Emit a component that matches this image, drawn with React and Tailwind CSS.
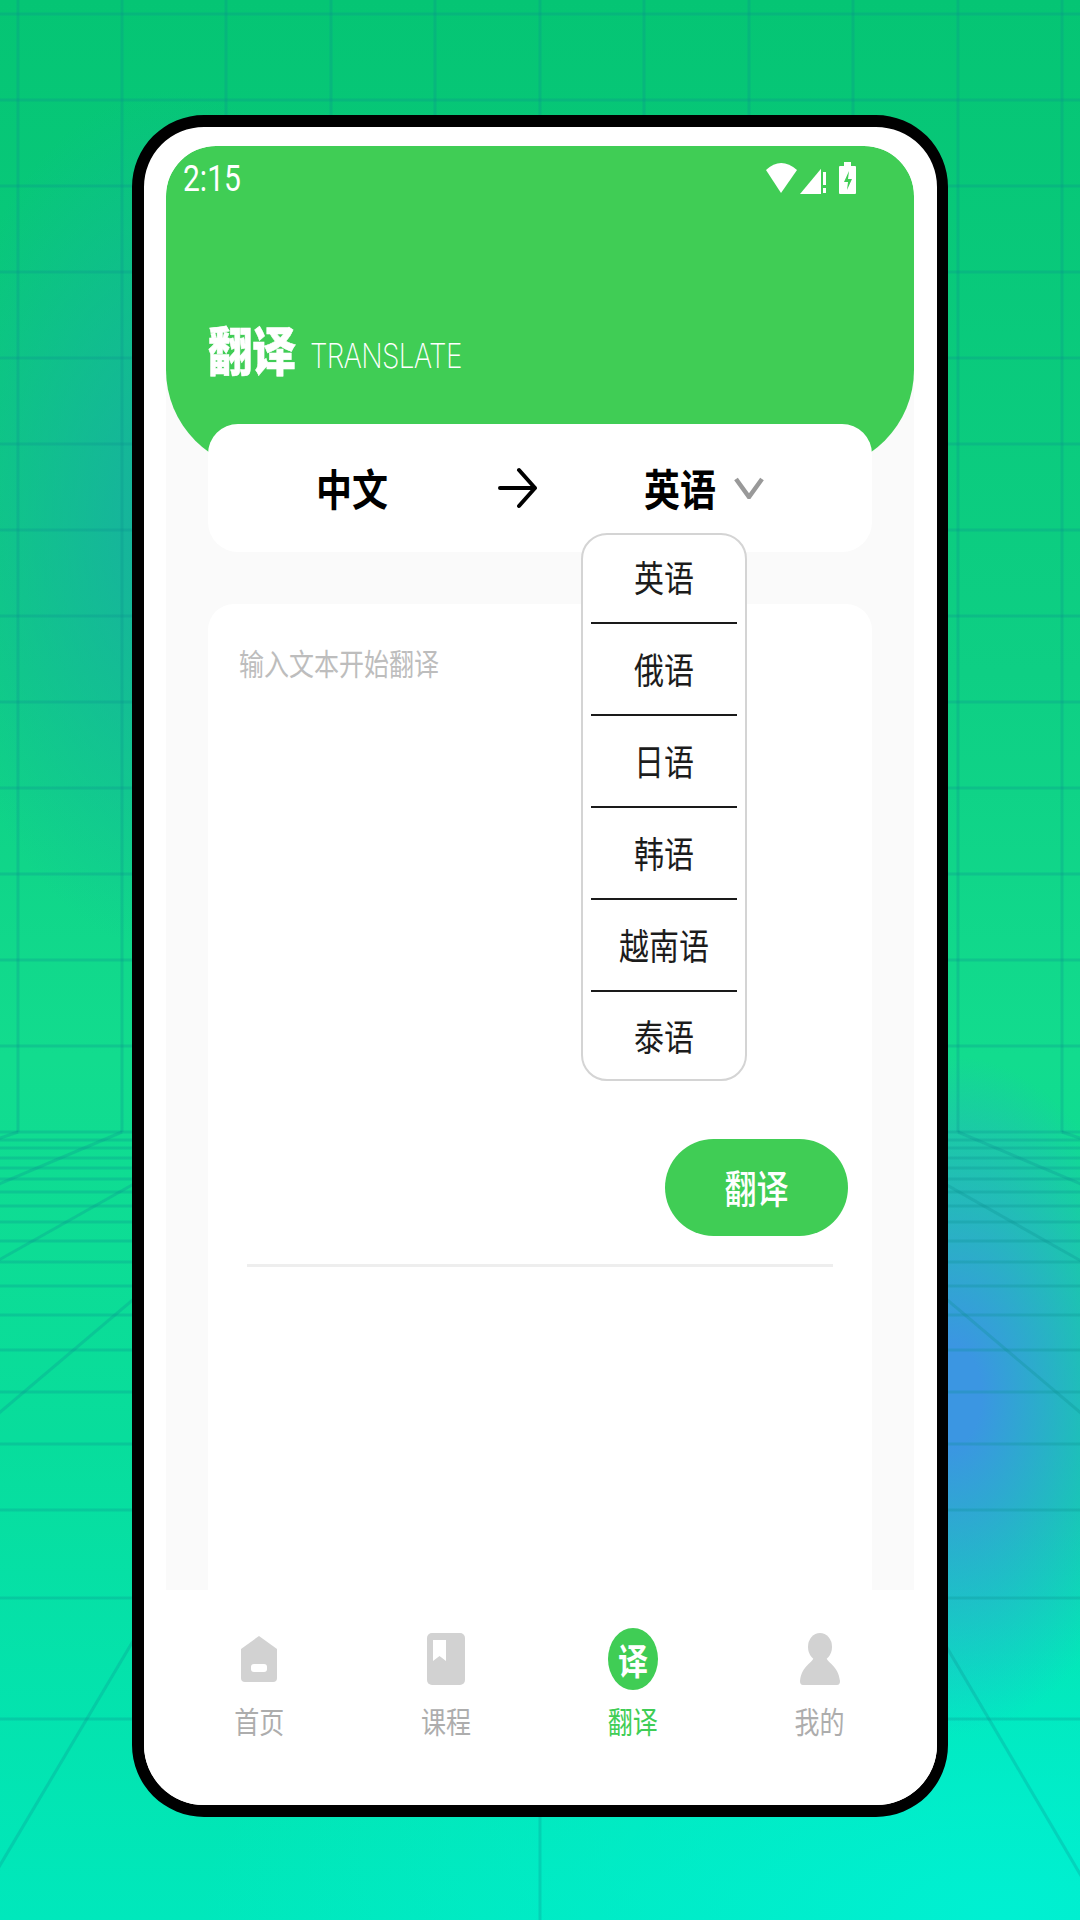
import React from 'react'

const CJK = "font-['Noto_Sans_CJK_SC','Noto_Sans',sans-serif]"

const gridX = [18, 122, 226, 331, 435, 540, 644, 749, 853, 958, 1062]
const wallY = [14, 100, 186, 272, 358, 444, 530, 616, 702, 788, 874, 960, 1046]
const floorY = [1132, 1140, 1148, 1158, 1168, 1179, 1192, 1206, 1222, 1241, 1262, 1286, 1315, 1350, 1392, 1444, 1510, 1598, 1719]

const languages = ['英语', '俄语', '日语', '韩语', '越南语', '泰语']

const GridBackdrop = () => (
  <svg className="absolute inset-0" width="1080" height="1920" viewBox="0 0 1080 1920" fill="none">
    <g stroke="#0a8f8f" strokeOpacity="0.28" strokeWidth="3">
      {gridX.map((x) => <line key={x} x1={x} y1="0" x2={x} y2="1132" />)}
      {wallY.map((y) => <line key={y} x1="0" y1={y} x2="1080" y2={y} />)}
      {floorY.map((y) => <line key={y} x1="0" y1={y} x2="1080" y2={y} />)}
      {gridX.map((x) => {
        // rays run from the vanishing point through each wall line's foot
        const k = (1920 - 955) / (1132 - 955)
        return <line key={x} x1={x} y1="1132" x2={540 + (x - 540) * k} y2="1920" />
      })}
    </g>
  </svg>
)

const StatusIcons = () => (
  <svg width="92" height="36" viewBox="0 0 92 36" fill="white">
    <path d="M1 10 Q16 -4 32 10 L16 33 Z" />
    <path d="M35 34 L60 4 V34 Z" fill="white" />
    <rect x="56" y="4" width="5" height="30" fill="#40cd55" />
    <rect x="58" y="12" width="3" height="13" />
    <rect x="58" y="28" width="3" height="5" />
    <path d="M80 3 h7 v4 h4 a1 1 0 0 1 1 1 v26 a1 1 0 0 1 -1 1 h-15 a1 1 0 0 1 -1 -1 v-26 a1 1 0 0 1 1 -1 h4 Z" transform="translate(-1 -1)" />
    <path d="M84 11 L79 22 H83 L82 30 L87 19 H83 Z" fill="#40cd55" />
  </svg>
)

const HomeIcon = () => (
  <svg width="38" height="47" viewBox="0 0 38 47" fill="#d2d2d2">
    <path d="M19 0 L37 13 V42 a4 4 0 0 1 -4 4 H5 a4 4 0 0 1 -4 -4 V13 Z" />
    <rect x="11" y="28" width="16" height="8" rx="3" fill="white" />
  </svg>
)

const BookIcon = () => (
  <svg width="38" height="52" viewBox="0 0 38 52" fill="#d2d2d2">
    <rect width="38" height="52" rx="5" />
    <path d="M6 7 H19 V28 L12.500 23 L6 28 Z" fill="white" />
  </svg>
)

const UserIcon = () => (
  <svg width="40" height="52" viewBox="0 0 40 52" fill="#d2d2d2">
    <ellipse cx="20" cy="14" rx="12" ry="14" />
    <path d="M14 24 H26 C27 30 38 32 40 48 Q40 52 37 52 H3 Q0 52 0 48 C2 32 13 30 14 24 Z" />
  </svg>
)

const NavItem = ({ icon, label, active }) => (
  <div className="flex flex-1 flex-col items-center">
    <div className="flex h-[62px] items-center justify-center">{icon}</div>
    <span className={`mt-[14px] block text-[25px] leading-[32px] scale-y-120 ${CJK} ${active ? 'text-[#40cd55]' : 'text-[#adadad]'}`}>{label}</span>
  </div>
)

export default function App() {
  return (
    <div className="relative h-[1920px] w-[1080px] overflow-hidden bg-[radial-gradient(ellipse_210px_340px_at_950px_1395px,#3b96e2_0%,#3b96e2_15%,transparent_100%),radial-gradient(ellipse_240px_430px_at_170px_520px,#18b0a0,transparent),radial-gradient(ellipse_800px_420px_at_1000px_1920px,#00f0d2,transparent),linear-gradient(to_bottom,#05c574_0%,#0ecf84_35%,#12dc8e_55%,#08dd9c_75%,#00e8bc_100%)] pt-[115px] pl-[132px]">
      <GridBackdrop />

      {/* phone frame */}
      <div className="relative flex h-[1702px] w-[816px] flex-col overflow-hidden rounded-[72px] border-y-[12px] border-r-[11px] border-l-[12px] border-black bg-white">
        <div className="mt-[19px] mr-[23px] ml-[22px] flex h-[1444px] flex-col overflow-hidden rounded-t-[50px] bg-[#fafafa]">
          <div className="flex h-[324px] shrink-0 flex-col rounded-t-[50px] rounded-b-[100px] bg-[#40cd55] pt-[14px] pr-[57px] pl-[17px] text-white">
            <div className="flex items-start justify-between">
              <span className="mt-[1px] block scale-y-120 font-['Roboto',sans-serif] text-[30px] leading-[36px] font-normal">2:15</span>
              <StatusIcons />
            </div>
            <div className="mt-[125px] ml-[25px] flex items-end">
              <span className={`block scale-y-120 text-[44px] leading-[52px] font-black [-webkit-text-stroke:0.5px_white] ${CJK}`}>翻译</span>
              <span className="mb-[3px] ml-[14px] block scale-y-120 font-['Inter',sans-serif] text-[28px] leading-[30px] font-extralight tracking-[-0.7px]">TRANSLATE</span>
            </div>
          </div>

          <div className="relative z-10 mx-[42px] -mt-[46px] flex h-[128px] shrink-0 items-center rounded-[30px] bg-white pl-[108px] text-black">
            <span className={`mb-[2px] block w-[182px] scale-y-120 text-[36px] leading-[44px] font-bold ${CJK}`}>中文</span>
            <svg width="40" height="42" viewBox="0 0 40 42" fill="none" stroke="black" strokeWidth="4" strokeLinecap="round" strokeLinejoin="round">
              <path d="M2 21 H37 M21 3 L37 21 L21 39" />
            </svg>
            <span className={`mb-[2px] ml-[106px] block scale-y-120 text-[36px] leading-[44px] font-bold ${CJK}`}>英语</span>
            <svg className="ml-[18px]" width="30" height="22" viewBox="0 0 30 22" fill="none" stroke="#999999" strokeWidth="4.500">
              <path d="M2 2 L15 20 L28 2" />
            </svg>

            {/* language menu */}
            <div className="absolute top-[109px] left-[373px] flex w-[166px] flex-col rounded-[26px] border-2 border-[#d4d4d4] bg-white px-[8px]">
              {languages.map((lang, i) => (
                <div key={lang} className={`flex items-center justify-center ${i === 0 ? 'h-[89px] pb-[3px]' : i === languages.length - 1 ? 'h-[87px]' : 'h-[92px]'} ${i < languages.length - 1 ? 'border-b-2 border-[#1a1a1a]' : ''}`}>
                  <span className={`mb-[2px] block scale-y-120 text-[30px] leading-[40px] text-[#1c1c1c] ${CJK}`}>{lang}</span>
                </div>
              ))}
            </div>
          </div>

          <div className="mx-[42px] mt-[52px] flex flex-1 flex-col rounded-t-[26px] bg-white">
            <span className={`mt-[42px] ml-[31px] block origin-left scale-y-120 text-[25px] leading-[32px] text-[#bdbdbd] ${CJK}`}>输入文本开始翻译</span>
            <div className="mt-[461px] mr-[24px] flex justify-end">
              <div className="flex h-[97px] w-[183px] items-center justify-center rounded-full bg-[#40cd55]">
                <span className={`mb-[3px] block scale-y-120 text-[32px] leading-[40px] font-medium text-white ${CJK}`}>翻译</span>
              </div>
            </div>
            <div className="mx-[39px] mt-[28px] h-[3px] bg-[#eeeeee]" />
          </div>
        </div>

        {/* bottom nav */}
        <div className="flex flex-1 bg-white pt-[38px] pr-[24px] pl-[22px]">
          <NavItem label="首页" icon={<HomeIcon />} />
          <NavItem label="课程" icon={<BookIcon />} />
          <NavItem label="翻译" active icon={
            <div className="flex h-[62px] w-[50px] items-center justify-center rounded-[50%] bg-[#40cd55]">
              <span className={`block scale-y-120 text-[30px] leading-[36px] font-bold text-white ${CJK}`}>译</span>
            </div>
          } />
          <NavItem label="我的" icon={<UserIcon />} />
        </div>
      </div>
    </div>
  )
}
